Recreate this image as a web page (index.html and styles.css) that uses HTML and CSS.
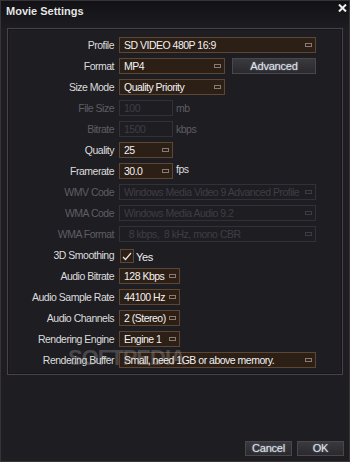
FILE: index.html
```html
<!DOCTYPE html>
<html lang="en">
  <head>
    <meta charset="UTF-8" />
    <meta name="viewport" content="width=device-width, initial-scale=1.0" />
    <title>Movie Settings</title>
    <link rel="stylesheet" href="styles.css">
  </head>
  <body>
    <div class="window">
      <header class="titlebar">
        <h1>Movie Settings</h1>
        <button class="close" title="Close">
          <svg width="9" height="8" viewBox="0 0 9 8">
            <path d="M1 0.5 L8 7.5 M8 0.5 L1 7.5" stroke="#f2f2f2" stroke-width="2" />
          </svg>
        </button>
      </header>

      <main class="group">
        <div class="row">
          <span class="label">Profile</span>
          <div class="select full"><span>SD VIDEO 480P 16:9</span><i class="drop"></i></div>
        </div>
        <div class="row">
          <span class="label">Format</span>
          <div class="select mid"><span>MP4</span><i class="drop"></i></div>
          <button class="btn advanced">Advanced</button>
        </div>
        <div class="row">
          <span class="label">Size Mode</span>
          <div class="select mid"><span>Quality Priority</span><i class="drop"></i></div>
        </div>
        <div class="row off">
          <span class="label">File Size</span>
          <div class="field small"><span>100</span></div>
          <span class="unit">mb</span>
        </div>
        <div class="row off">
          <span class="label">Bitrate</span>
          <div class="field small"><span>1500</span></div>
          <span class="unit">kbps</span>
        </div>
        <div class="row">
          <span class="label">Quality</span>
          <div class="select small"><span>25</span><i class="drop"></i></div>
        </div>
        <div class="row">
          <span class="label">Framerate</span>
          <div class="select small"><span>30.0</span><i class="drop"></i></div>
          <span class="unit raised">fps</span>
        </div>
        <div class="row off">
          <span class="label">WMV Code</span>
          <div class="select full"><span>Windows Media Video 9 Advanced Profile</span><i class="drop"></i></div>
        </div>
        <div class="row off">
          <span class="label">WMA Code</span>
          <div class="select full"><span>Windows Media Audio 9.2</span><i class="drop"></i></div>
        </div>
        <div class="row off">
          <span class="label">WMA Format</span>
          <div class="select full"><span>&nbsp;&nbsp;8 kbps,&nbsp;&nbsp;8 kHz, mono CBR</span><i class="drop"></i></div>
        </div>
        <div class="row">
          <span class="label">3D Smoothing</span>
          <span class="check">
            <svg width="10" height="9" viewBox="0 0 10 9">
              <path d="M1 5 L3.5 7.5 L9 1" fill="none" stroke="#e6e6e6" stroke-width="1.2" />
            </svg>
          </span>
          <span class="check-text">Yes</span>
        </div>
        <div class="row">
          <span class="label">Audio Bitrate</span>
          <div class="select audio"><span>128 Kbps</span><i class="drop"></i></div>
        </div>
        <div class="row">
          <span class="label">Audio Sample Rate</span>
          <div class="select audio"><span>44100 Hz</span><i class="drop"></i></div>
        </div>
        <div class="row">
          <span class="label">Audio Channels</span>
          <div class="select audio"><span>2 (Stereo)</span><i class="drop"></i></div>
        </div>
        <div class="row">
          <span class="label">Rendering Engine</span>
          <div class="select audio"><span>Engine 1</span><i class="drop"></i></div>
        </div>
        <div class="row">
          <span class="label">Rendering Buffer</span>
          <div class="select full"><span>Small, need 1GB or above memory.</span><i class="drop"></i></div>
        </div>
        <span class="watermark">SOFTPEDIA</span>
      </main>

      <footer class="actions">
        <button class="btn">Cancel</button>
        <button class="btn">OK</button>
      </footer>
    </div>
  </body>
</html>
```

FILE: styles.css
```css
body {
  margin: 0;
  padding: 0;
  background-color: #1e1d22;
  font-family: "Liberation Sans", Arial, sans-serif;
  font-size: 10.5px;
  letter-spacing: -0.5px;
  color: #e2e2e2;
}

.window {
  width: 350px;
  height: 462px;
  box-sizing: border-box;
  border: 1px solid #3a3239;
  background-color: #1e1d22;
  display: flex;
  flex-direction: column;
}

.titlebar {
  height: 27px;
  display: flex;
  align-items: flex-start;
  justify-content: space-between;
  background: linear-gradient(#121115, #1d1c21);
}

.titlebar h1 {
  margin: 4px 0 0 5px;
  font-size: 11px;
  font-weight: bold;
  letter-spacing: 0;
  color: #e6e6e6;
  text-shadow: 0 0 1px #000;
}

.close {
  margin: 3px 2px 0 0;
  padding: 0;
  border: none;
  background: none;
  line-height: 0;
}

.group {
  position: relative;
  height: 347px;
  margin: 0 6px;
  box-sizing: border-box;
  border: 1px solid #4a4049;
  box-shadow: inset 0 0 0 1px #17161b;
  padding-top: 8px;
  display: flex;
  flex-direction: column;
  gap: 5px;
}

.row {
  height: 16px;
  display: flex;
  align-items: center;
}

.label {
  width: 106px;
  margin-right: 5px;
  text-align: right;
  color: #dcdcdc;
  white-space: nowrap;
}

.row.off .label {
  color: #5e5d62;
}

.select,
.field {
  height: 16px;
  box-sizing: border-box;
  border: 1px solid #5c4737;
  background-color: #2c1f16;
  color: #f2f2f2;
  display: flex;
  align-items: center;
  justify-content: space-between;
  padding: 0 3px 0 4px;
  white-space: nowrap;
  overflow: hidden;
}

.drop {
  width: 7px;
  height: 4px;
  margin-left: 2px;
  box-sizing: border-box;
  border: 1px solid #8c796d;
  flex-shrink: 0;
}

.row.off .select,
.row.off .field {
  border-color: #333138;
  background-color: #1e1d22;
  color: #3f3e44;
}

.row.off .drop {
  border-color: #3e3c42;
}

.full {
  width: 197px;
}

.mid {
  width: 106px;
}

.small {
  width: 54px;
}

.audio {
  width: 61px;
}

.unit {
  margin-left: 3px;
  color: #dcdcdc;
}

.row.off .unit {
  color: #5e5d62;
}

.unit.raised {
  margin-top: -4px;
}

.check {
  width: 14px;
  height: 14px;
  margin-left: 1px;
  margin-top: 2px;
  box-sizing: border-box;
  border: 1px solid #5c4737;
  background-color: #2c1f16;
  display: flex;
  align-items: center;
  justify-content: center;
}

.check-text {
  margin-left: 2px;
  margin-top: 4px;
  font-size: 11px;
  letter-spacing: -0.3px;
  color: #eeeeee;
}

.btn {
  box-sizing: border-box;
  padding: 0;
  border: 1px solid #4a474c;
  background: linear-gradient(#3a393e, #2a292e);
  color: #e4e4e4;
  font-family: inherit;
  font-size: 11px;
  letter-spacing: -0.2px;
  text-shadow: 0 0 2px #7d93b0;
  cursor: pointer;
}

.advanced {
  width: 84px;
  height: 16px;
  margin-left: 7px;
}

.watermark {
  position: absolute;
  left: 60px;
  top: 316px;
  font-size: 22px;
  font-weight: bold;
  letter-spacing: -1px;
  color: rgba(200, 200, 200, 0.25);
  pointer-events: none;
}

.actions {
  margin-top: auto;
  padding: 0 5px 5px 0;
  display: flex;
  justify-content: flex-end;
  gap: 5px;
}

.actions .btn {
  width: 47px;
  height: 15px;
  line-height: 13px;
}
```
